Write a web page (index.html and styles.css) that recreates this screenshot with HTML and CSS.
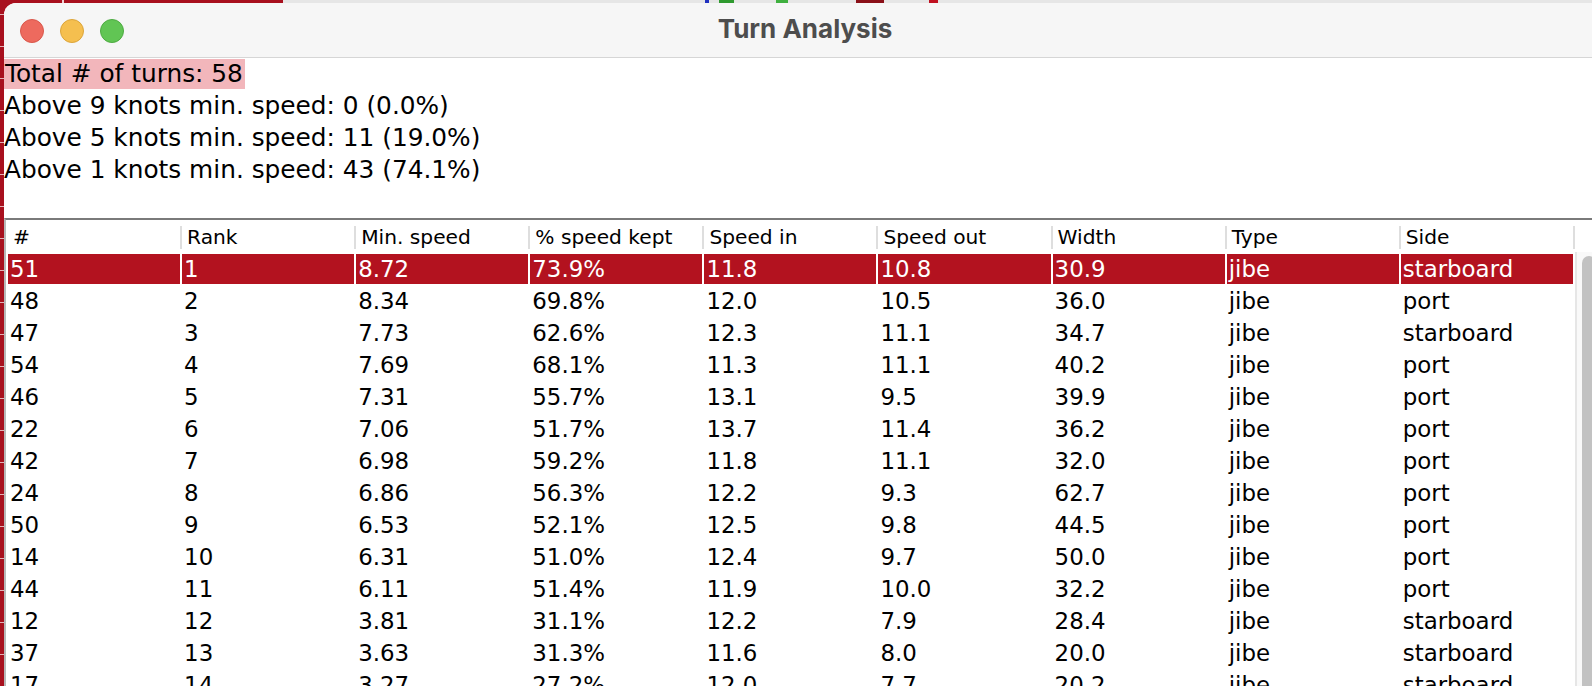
FILE: index.html
```html
<!DOCTYPE html>
<html>
<head>
<meta charset="utf-8">
<title>Turn Analysis</title>
<link rel="stylesheet" href="styles.css">
</head>
<body>
<div class="window">
  <div class="titlebar">
    <div class="lights">
      <span class="light red"></span>
      <span class="light yellow"></span>
      <span class="light green"></span>
    </div>
    <div class="title">Turn Analysis</div>
    <div class="spacer"></div>
  </div>
  <div class="content">
    <div class="summary">
      <div class="line total"><span class="hl">Total # of turns: 58</span></div>
      <div class="line">Above 9 knots min. speed: 0 (0.0%)</div>
      <div class="line">Above 5 knots min. speed: 11 (19.0%)</div>
      <div class="line">Above 1 knots min. speed: 43 (74.1%)</div>
    </div>
    <div class="pane">
      <div class="thead">
        <div class="th">#</div>
        <div class="th">Rank</div>
        <div class="th">Min. speed</div>
        <div class="th">% speed kept</div>
        <div class="th">Speed in</div>
        <div class="th">Speed out</div>
        <div class="th">Width</div>
        <div class="th">Type</div>
        <div class="th">Side</div>
        <div class="th corner"></div>
      </div>
      <div class="tbody-wrap">
        <div class="tbody">
          <div class="row sel"><div class="td">51</div><div class="td">1</div><div class="td">8.72</div><div class="td">73.9%</div><div class="td">11.8</div><div class="td">10.8</div><div class="td">30.9</div><div class="td">jibe</div><div class="td">starboard</div></div>
          <div class="row"><div class="td">48</div><div class="td">2</div><div class="td">8.34</div><div class="td">69.8%</div><div class="td">12.0</div><div class="td">10.5</div><div class="td">36.0</div><div class="td">jibe</div><div class="td">port</div></div>
          <div class="row"><div class="td">47</div><div class="td">3</div><div class="td">7.73</div><div class="td">62.6%</div><div class="td">12.3</div><div class="td">11.1</div><div class="td">34.7</div><div class="td">jibe</div><div class="td">starboard</div></div>
          <div class="row"><div class="td">54</div><div class="td">4</div><div class="td">7.69</div><div class="td">68.1%</div><div class="td">11.3</div><div class="td">11.1</div><div class="td">40.2</div><div class="td">jibe</div><div class="td">port</div></div>
          <div class="row"><div class="td">46</div><div class="td">5</div><div class="td">7.31</div><div class="td">55.7%</div><div class="td">13.1</div><div class="td">9.5</div><div class="td">39.9</div><div class="td">jibe</div><div class="td">port</div></div>
          <div class="row"><div class="td">22</div><div class="td">6</div><div class="td">7.06</div><div class="td">51.7%</div><div class="td">13.7</div><div class="td">11.4</div><div class="td">36.2</div><div class="td">jibe</div><div class="td">port</div></div>
          <div class="row"><div class="td">42</div><div class="td">7</div><div class="td">6.98</div><div class="td">59.2%</div><div class="td">11.8</div><div class="td">11.1</div><div class="td">32.0</div><div class="td">jibe</div><div class="td">port</div></div>
          <div class="row"><div class="td">24</div><div class="td">8</div><div class="td">6.86</div><div class="td">56.3%</div><div class="td">12.2</div><div class="td">9.3</div><div class="td">62.7</div><div class="td">jibe</div><div class="td">port</div></div>
          <div class="row"><div class="td">50</div><div class="td">9</div><div class="td">6.53</div><div class="td">52.1%</div><div class="td">12.5</div><div class="td">9.8</div><div class="td">44.5</div><div class="td">jibe</div><div class="td">port</div></div>
          <div class="row"><div class="td">14</div><div class="td">10</div><div class="td">6.31</div><div class="td">51.0%</div><div class="td">12.4</div><div class="td">9.7</div><div class="td">50.0</div><div class="td">jibe</div><div class="td">port</div></div>
          <div class="row"><div class="td">44</div><div class="td">11</div><div class="td">6.11</div><div class="td">51.4%</div><div class="td">11.9</div><div class="td">10.0</div><div class="td">32.2</div><div class="td">jibe</div><div class="td">port</div></div>
          <div class="row"><div class="td">12</div><div class="td">12</div><div class="td">3.81</div><div class="td">31.1%</div><div class="td">12.2</div><div class="td">7.9</div><div class="td">28.4</div><div class="td">jibe</div><div class="td">starboard</div></div>
          <div class="row"><div class="td">37</div><div class="td">13</div><div class="td">3.63</div><div class="td">31.3%</div><div class="td">11.6</div><div class="td">8.0</div><div class="td">20.0</div><div class="td">jibe</div><div class="td">starboard</div></div>
          <div class="row"><div class="td">17</div><div class="td">14</div><div class="td">3.27</div><div class="td">27.2%</div><div class="td">12.0</div><div class="td">7.7</div><div class="td">20.2</div><div class="td">jibe</div><div class="td">starboard</div></div>
        </div>
        <div class="vscroll"><div class="thumb"></div></div>
      </div>
    </div>
  </div>
</div>
</body>
</html>
```

FILE: styles.css
```css
html, body {
  margin: 0;
  padding: 0;
  width: 1592px;
  height: 686px;
  overflow: hidden;
}

body {
  background-color: #a8101e;
  background-image:
    linear-gradient(to right,
      #a8101e 0 62px, #f0d0d3 62px 64px, #a8101e 64px 283px,
      #e6e6e6 283px 705px, #2030c0 705px 709px, #e6e6e6 709px 719px,
      #2f9a2f 719px 734px, #e6e6e6 734px 776px, #3fb03f 776px 788px,
      #e6e6e6 788px 856px, #8a1018 856px 884px, #e6e6e6 884px 929px,
      #c01020 929px 938px, #e6e6e6 938px 100%),
    repeating-linear-gradient(to bottom,
      transparent 0 14px, #e3b2b7 14px 15px, transparent 15px 32px);
  background-size: 100% 3px, 4px 100%;
  background-repeat: no-repeat, no-repeat;
}

.window {
  margin: 3px 0 0 4px;
  width: 1602px;
  height: 683px;
  background: #ffffff;
  border-top-left-radius: 12px;
  overflow: hidden;
  font-family: "DejaVu Sans", "Noto Sans", sans-serif;
  color: #000;
}

.titlebar {
  display: grid;
  grid-template-columns: 1fr auto 1fr;
  align-items: center;
  height: 54px;
  background: #f6f6f6;
  border-bottom: 1px solid #d6d6d6;
}

.lights {
  display: flex;
  gap: 16px;
  padding-left: 16px;
  padding-top: 1px;
}

.light {
  display: block;
  width: 24px;
  height: 24px;
  border-radius: 50%;
  box-sizing: border-box;
}

.light.red { background: #ed6a5e; border: 1px solid #d9574b; }
.light.yellow { background: #f5bf4f; border: 1px solid #dca53a; }
.light.green { background: #61c554; border: 1px solid #4eab42; }

.title {
  font-family: Inter, "Liberation Sans", sans-serif;
  font-weight: 700;
  font-size: 26px;
  color: #4d4d4d;
  line-height: 30px;
  padding-bottom: 2px;
}

.summary {
  padding-top: 1px;
  font-size: 24.8px;
}

.line {
  height: 32px;
  line-height: 32px;
  white-space: nowrap;
}

.line.total {
  height: 31px;
  line-height: 30px;
}

.hl {
  display: inline-block;
  vertical-align: top;
  background: #f2b6bb;
  padding: 0 2px 0 1px;
  height: 30px;
}

.pane {
  margin-top: 32px;
  width: 1588px;
  box-sizing: border-box;
  border-top: 2px solid #7a7a7a;
  border-left: 2px solid #b8b8b8;
}

.thead {
  display: grid;
  grid-template-columns: repeat(9, 174.1px) 1fr;
  height: 32px;
}

.th {
  font-size: 20.2px;
  line-height: 30px;
  padding: 2px 0 0 7px;
  white-space: nowrap;
  background: linear-gradient(#dedede, #dedede) 0 6px / 2px 23px no-repeat;
}

.th:first-child {
  background: none;
}

.tbody-wrap {
  display: flex;
}

.tbody {
  width: 1566.9px;
  flex: none;
}

.row {
  display: grid;
  grid-template-columns: repeat(9, 174.1px);
  height: 32px;
}

.td {
  box-sizing: border-box;
  height: 32px;
  border-top: 2px solid #fff;
  border-left: 2px solid #fff;
  padding-left: 2px;
  font-size: 22.9px;
  line-height: 30px;
  white-space: nowrap;
  overflow: hidden;
}

.row.sel .td {
  background: #b3121f;
  color: #fff;
}

.vscroll {
  flex: 1;
  margin-left: 2px;
  border-left: 2px solid #e6e6e6;
  background: #f9f9f9;
  padding: 4px 0 0 5px;
}

.thumb {
  width: 14px;
  height: 600px;
  background: #c2c2c2;
  border-radius: 7px;
}
```
